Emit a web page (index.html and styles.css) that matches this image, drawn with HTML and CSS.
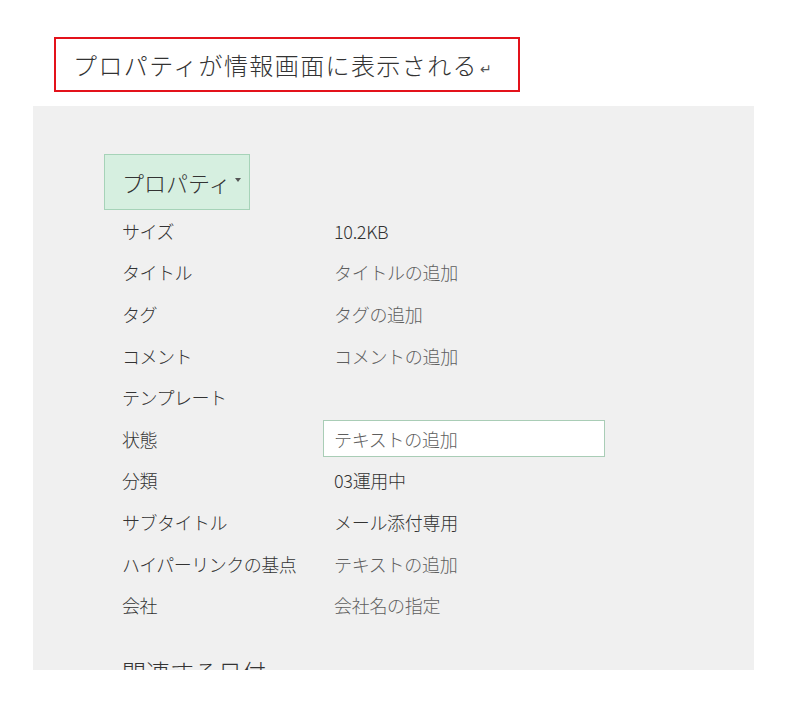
FILE: index.html
```html
<!DOCTYPE html>
<html lang="ja">
<head>
<meta charset="utf-8">
<link rel="stylesheet" href="styles.css">
</head>
<body>
<div class="page">
  <div class="caption">プロパティが情報画面に表示される<span class="ret">↵</span></div>
  <div class="panel">
    <div class="prop-btn">プロパティ<span class="caret"></span></div>
    <div class="rows">
      <div class="lbl">サイズ</div><div class="val dark">10.2KB</div>
      <div class="lbl">タイトル</div><div class="val">タイトルの追加</div>
      <div class="lbl">タグ</div><div class="val">タグの追加</div>
      <div class="lbl">コメント</div><div class="val">コメントの追加</div>
      <div class="lbl">テンプレート</div><div class="val"></div>
      <div class="lbl">状態</div><div class="val"><div class="input">テキストの追加</div></div>
      <div class="lbl">分類</div><div class="val dark">03運用中</div>
      <div class="lbl">サブタイトル</div><div class="val dark">メール添付専用</div>
      <div class="lbl">ハイパーリンクの基点</div><div class="val">テキストの追加</div>
      <div class="lbl">会社</div><div class="val">会社名の指定</div>
    </div>
    <div class="section">関連する日付</div>
  </div>
</div>
</body>
</html>
```
FILE: styles.css
```css
html, body {
  margin: 0;
  padding: 0;
  background: #ffffff;
}
body {
  font-family: "Noto Sans CJK JP", "Noto Sans", sans-serif;
  width: 800px;
  height: 705px;
  overflow: hidden;
}
.page {
  padding-top: 37px;
}
.caption {
  margin-left: 54px;
  width: 462px;
  height: 51px;
  border: 2px solid #e3121b;
  display: flex;
  align-items: center;
  padding-left: 17px;
  box-sizing: content-box;
  width: 445px;
  font-size: 24px;
  font-weight: 300;
  color: #333333;
  letter-spacing: 1.4px;
}
.ret {
  font-size: 14px;
  letter-spacing: 0;
  color: #555;
  margin-left: 2px;
  position: relative;
  top: 3px;
}
.panel {
  margin-top: 14px;
  margin-left: 33px;
  width: 721px;
  height: 564px;
  background: #f0f0f0;
  overflow: hidden;
  padding-top: 48px;
  box-sizing: border-box;
}
.prop-btn {
  margin-left: 71px;
  width: 146px;
  height: 56px;
  box-sizing: border-box;
  background: #d6efe0;
  border: 1px solid #a6d3b8;
  display: flex;
  align-items: center;
  padding-left: 17px;
  font-size: 22px;
  font-weight: 300;
  color: #333333;
  letter-spacing: 0;
}
.caret {
  display: inline-block;
  width: 0;
  height: 0;
  border-left: 3px solid transparent;
  border-right: 3px solid transparent;
  border-top: 4px solid #555;
  margin-left: 4px;
  margin-top: -4px;
}
.rows {
  margin-left: 89px;
  display: grid;
  grid-template-columns: 212px 1fr;
  grid-auto-rows: 41.6px;
  align-items: center;
  font-size: 18px;
  font-weight: 300;
  color: #333333;
}
.lbl {
  letter-spacing: -0.5px;
}
.val {
  color: #5e5e5e;
  letter-spacing: -0.3px;
}
.val.dark {
  color: #333333;
}
.input {
  margin-left: -11px;
  width: 282px;
  height: 37px;
  box-sizing: border-box;
  background: #ffffff;
  border: 1px solid #a9cdb6;
  display: flex;
  align-items: center;
  padding-left: 10px;
  color: #5e5e5e;
}
.section {
  margin-left: 89px;
  margin-top: 28px;
  font-size: 24px;
  font-weight: 300;
  color: #333333;
}
```
